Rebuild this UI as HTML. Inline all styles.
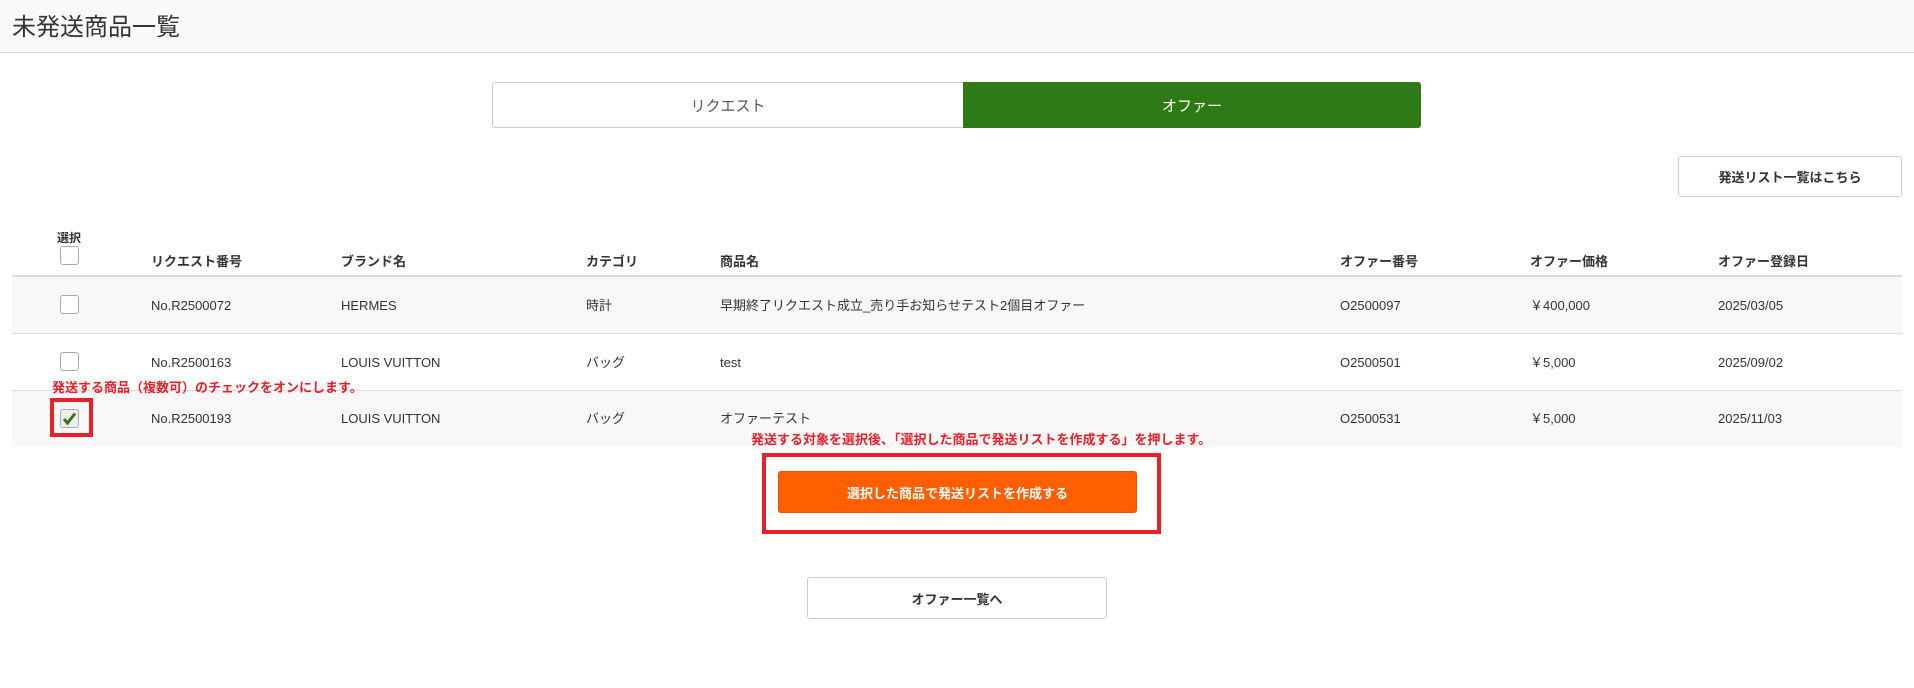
<!DOCTYPE html>
<html><head><meta charset="utf-8"><style>
*{box-sizing:border-box;margin:0;padding:0}
body{width:1914px;height:688px;background:#fff;font-family:"Liberation Sans","Noto Sans CJK JP",sans-serif;color:#333;position:relative;overflow:hidden}
.abs{position:absolute}
.hdr{left:0;top:0;width:1914px;height:53px;background:#fafafa;border-bottom:1px solid #d8d8d8}
.hdr span{position:absolute;left:12px;top:13px;font-size:24px;color:#333;line-height:30px}
.tab{top:82px;height:46px;font-size:15px;display:flex;align-items:center;justify-content:center}
.btn{border:1px solid #ccc;border-radius:3px;background:#fff;font-size:13px;font-weight:bold;display:flex;align-items:center;justify-content:center;color:#333}
.cb{width:19px;height:19px;border:1px solid #aaa;border-radius:3px;background:#fff}
.row{left:12px;width:1890px;border-bottom:1px solid #ddd}
.c{position:absolute;font-size:13px;color:#333;line-height:18px;height:18px;white-space:nowrap}
.h{font-weight:bold;font-size:13px}
.red{color:#e8202a;font-weight:bold;font-size:13px;line-height:18px;white-space:nowrap}
</style></head><body>
<div class="abs hdr"><span>未発送商品一覧</span></div>
<div class="abs tab" style="left:492px;width:472px;border:1px solid #ccc;border-radius:3px 0 0 3px;color:#555">リクエスト</div>
<div class="abs tab" style="left:963px;width:458px;background:#2e7a17;color:#fff;border-radius:0 3px 3px 0">オファー</div>
<div class="abs btn" style="left:1678px;top:156px;width:224px;height:41px">発送リスト一覧はこちら</div>

<div class="abs h" style="left:57px;top:229px;font-size:12px">選択</div>
<div class="abs cb" style="left:60px;top:246px"></div>
<div class="abs row" style="top:228px;height:49px;border-bottom:2px solid #ddd"></div>
<div class="c h" style="left:151px;top:253px">リクエスト番号</div>
<div class="c h" style="left:341px;top:253px">ブランド名</div>
<div class="c h" style="left:586px;top:253px">カテゴリ</div>
<div class="c h" style="left:720px;top:253px">商品名</div>
<div class="c h" style="left:1340px;top:253px">オファー番号</div>
<div class="c h" style="left:1530px;top:253px">オファー価格</div>
<div class="c h" style="left:1718px;top:253px">オファー登録日</div>

<div class="abs row" style="top:277px;height:57px;background:#f8f8f8"></div>
<div class="abs cb" style="left:60px;top:295px"></div>
<div class="c" style="left:151px;top:297px">No.R2500072</div>
<div class="c" style="left:341px;top:297px">HERMES</div>
<div class="c" style="left:586px;top:297px">時計</div>
<div class="c" style="left:720px;top:297px">早期終了リクエスト成立_売り手お知らせテスト2個目オファー</div>
<div class="c" style="left:1340px;top:297px">O2500097</div>
<div class="c" style="left:1530px;top:297px">￥400,000</div>
<div class="c" style="left:1718px;top:297px">2025/03/05</div>

<div class="abs row" style="top:334px;height:57px"></div>
<div class="abs cb" style="left:60px;top:352px"></div>
<div class="c" style="left:151px;top:354px">No.R2500163</div>
<div class="c" style="left:341px;top:354px">LOUIS VUITTON</div>
<div class="c" style="left:586px;top:354px">バッグ</div>
<div class="c" style="left:720px;top:354px">test</div>
<div class="c" style="left:1340px;top:354px">O2500501</div>
<div class="c" style="left:1530px;top:354px">￥5,000</div>
<div class="c" style="left:1718px;top:354px">2025/09/02</div>

<div class="abs" style="left:12px;top:391px;width:1890px;height:56px;background:#f8f8f8"></div>
<div class="abs cb" style="left:60px;top:409px;background:#eee"><svg width="17" height="17" viewBox="0 0 17 17"><path d="M3 9l3.5 4L14 3.5" stroke="#2e7a17" stroke-width="3" fill="none"/></svg></div>
<div class="c" style="left:151px;top:410px">No.R2500193</div>
<div class="c" style="left:341px;top:410px">LOUIS VUITTON</div>
<div class="c" style="left:586px;top:410px">バッグ</div>
<div class="c" style="left:720px;top:410px">オファーテスト</div>
<div class="c" style="left:1340px;top:410px">O2500531</div>
<div class="c" style="left:1530px;top:410px">￥5,000</div>
<div class="c" style="left:1718px;top:410px">2025/11/03</div>

<div class="abs red" style="left:52px;top:379px">発送する商品（複数可）のチェックをオンにします。</div>
<div class="abs" style="left:50px;top:398px;width:43px;height:39px;border:4px solid #e8202a"></div>
<div class="abs red" style="left:751px;top:431px">発送する対象を選択後、「選択した商品で発送リストを作成する」を押します。</div>
<div class="abs" style="left:762px;top:453px;width:399px;height:81px;border:4px solid #e8202a"></div>
<div class="abs btn" style="left:778px;top:471px;width:359px;height:42px;background:#ff5f00;border-color:#e05500;color:#fff">選択した商品で発送リストを作成する</div>

<div class="abs btn" style="left:807px;top:577px;width:300px;height:42px">オファー一覧へ</div>
</body></html>
